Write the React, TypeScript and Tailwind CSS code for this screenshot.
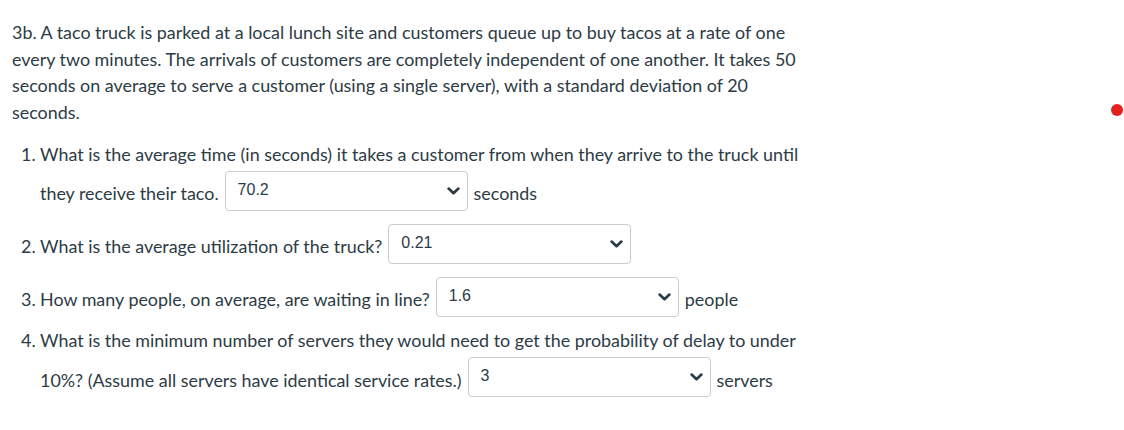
import React from "react";

function Chevron() {
  return (
    <svg width="13" height="8" viewBox="0 0 13 8" className="shrink-0">
      <path d="M1.6 1.6 L6.5 6.2 L11.4 1.6" fill="none" stroke="#2d3b45" strokeWidth="2.7" strokeLinecap="round" strokeLinejoin="round" />
    </svg>
  );
}

function Answer({ value }: { value: string }) {
  return (
    <div className="flex h-[40px] w-[243px] shrink-0 items-center justify-between rounded-[4px] border border-[#c7cdd1] bg-white pl-[12px] pr-[7px]">
      <span className="-mt-[2px] font-['Liberation_Sans',Arial,sans-serif] text-[16px] leading-none text-[#2d3b45]">{value}</span>
      <Chevron />
    </div>
  );
}

function Item({ n, children }: { n: number; children: React.ReactNode }) {
  return (
    <div className="flex items-baseline">
      <span className="w-[19px] shrink-0">{n}.</span>
      <div className="flex-1">{children}</div>
    </div>
  );
}

export default function App() {
  return (
    <div className="relative h-[430px] w-[1124px] bg-white font-['Lato','Open_Sans',sans-serif] text-[17.9px] leading-[26.7px] text-[#2d3b45]">
      <div className="w-[815px] pl-[12px] pt-[19px]">
        <p>
          3b. A taco truck is parked at a local lunch site and customers queue up to buy tacos at a rate of one
          every two minutes. The arrivals of customers are completely independent of one another. It takes 50
          seconds on average to serve a customer (using a single server), with a standard deviation of 20
          seconds.
        </p>

        <div className="mt-[15px] pl-[9px]">
          <Item n={1}>
            <div>What is the average time (in seconds) it takes a customer from when they arrive to the truck until</div>
            <div className="mt-[3px] flex items-center gap-[6px]">
              <span className="mt-[6px]">they receive their taco.</span>
              <Answer value="70.2" />
              <span className="mt-[6px]">seconds</span>
            </div>
          </Item>

          <div className="mt-[13px]">
            <Item n={2}>
              <div className="flex items-center gap-[6px]">
                <span className="mt-[6px]">What is the average utilization of the truck?</span>
                <Answer value="0.21" />
              </div>
            </Item>
          </div>

          <div className="mt-[13px]">
            <Item n={3}>
              <div className="flex items-center gap-[6px]">
                <span className="mt-[6px]">How many people, on average, are waiting in line?</span>
                <Answer value="1.6" />
                <span className="mt-[6px]">people</span>
              </div>
            </Item>
          </div>

          <div className="mt-[10px]">
            <Item n={4}>
              <div>What is the minimum number of servers they would need to get the probability of delay to under</div>
              <div className="mt-[4px] flex items-center gap-[6px]">
                <span className="mt-[6px]">10%? (Assume all servers have identical service rates.)</span>
                <Answer value="3" />
                <span className="mt-[6px]">servers</span>
              </div>
            </Item>
          </div>
        </div>
      </div>

      <div className="absolute left-[1111px] top-[104px] h-[12px] w-[12px] rounded-full bg-[#e3201b]" />
    </div>
  );
}
